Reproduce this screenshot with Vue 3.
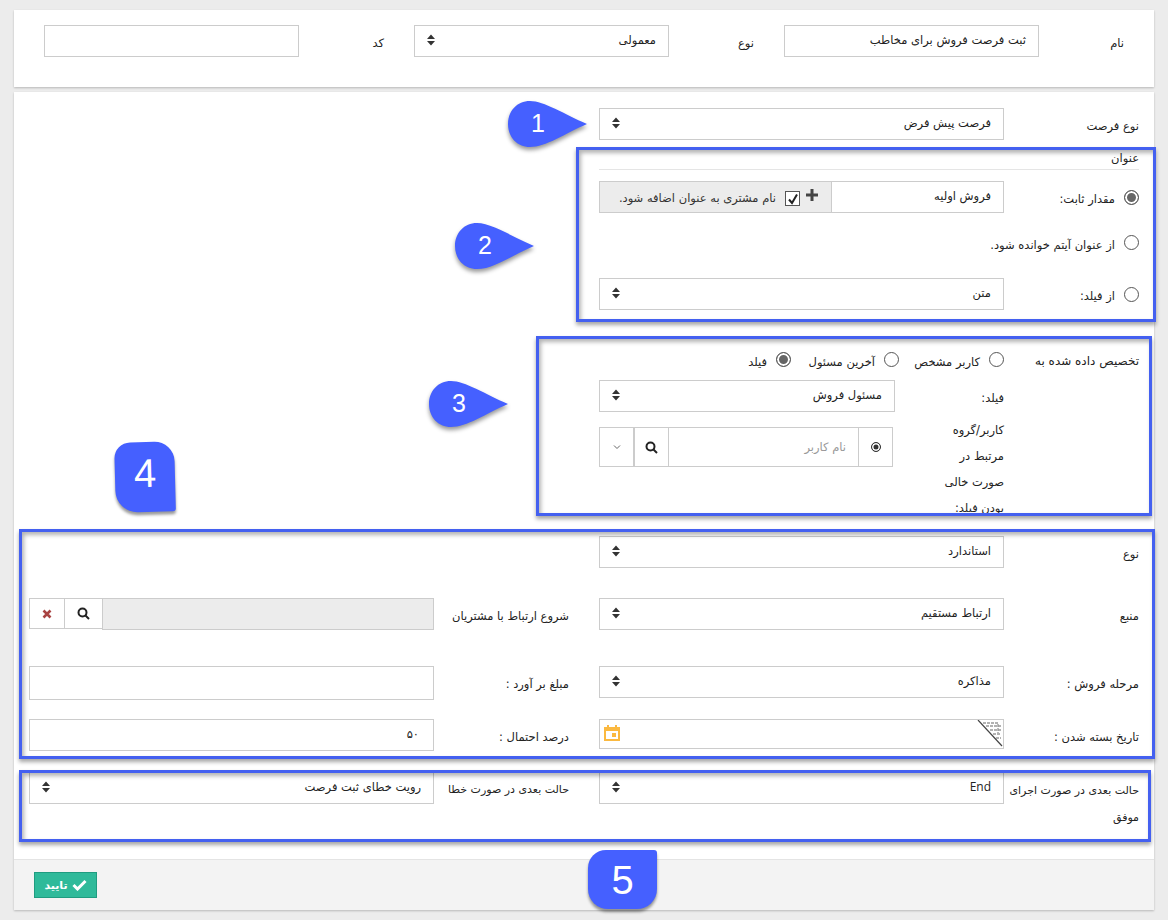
<template>
  <div class="page" dir="rtl">
    <!-- Top card -->
    <div class="card top-card">
      <div v-for="f in topFields" :key="f.label" class="top-field">
        <label class="top-label">{{ f.label }}</label>
        <div v-if="f.select" class="control select">
          <span>{{ f.value }}</span>
          <svg class="sort" width="10" height="12" viewBox="0 0 10 12"><path d="M5 0.5 9 5H1zM1 7h8l-4 4.500z" /></svg>
        </div>
        <div v-else class="control"><span>{{ f.value }}</span></div>
      </div>
    </div>

    <!-- Main card -->
    <div class="card main-card">
      <div class="body">
        <div class="row">
          <label class="label">نوع فرصت</label>
          <div class="control select">
            <span>فرصت پیش فرض</span>
            <svg class="sort" width="10" height="12" viewBox="0 0 10 12"><path d="M5 0.5 9 5H1zM1 7h8l-4 4.500z" /></svg>
          </div>
        </div>

        <div class="heading">عنوان</div>

        <div class="row radio-row first-radio">
          <span class="radio checked"></span>
          <label class="radio-label">مقدار ثابت:</label>
          <div class="input-group">
            <div class="control flat"><span>فروش اولیه</span></div>
            <div class="addon">
              <svg class="plus" width="12" height="12" viewBox="0 0 12 12"><path d="M4.500 0h3v4.500H12v3H7.500V12h-3V7.500H0v-3h4.500z" /></svg>
              <span class="check-box">
                <svg width="12" height="12" viewBox="0 0 12 12"><path d="M2 6.500 5 10 10 1.500" fill="none" stroke="#222" stroke-width="2" /></svg>
              </span>
              <span>نام مشتری به عنوان اضافه شود.</span>
            </div>
          </div>
        </div>

        <div class="row radio-row second-radio">
          <span class="radio"></span>
          <label class="radio-text">از عنوان آیتم خوانده شود.</label>
        </div>

        <div class="row radio-row third-radio">
          <span class="radio"></span>
          <label class="radio-label">از فیلد:</label>
          <div class="control select">
            <span>متن</span>
            <svg class="sort" width="10" height="12" viewBox="0 0 10 12"><path d="M5 0.5 9 5H1zM1 7h8l-4 4.500z" /></svg>
          </div>
        </div>

        <!-- Assigned to -->
        <div class="assign-row">
          <label class="label assign-label">تخصیص داده شده به</label>
          <div class="assign-options">
            <span class="option"><span class="radio"></span>کاربر مشخص</span>
            <span class="option"><span class="radio"></span>آخرین مسئول</span>
            <span class="option"><span class="radio checked"></span>فیلد</span>
          </div>
        </div>

        <div class="sub-row sub-field">
          <label class="sub-label">فیلد:</label>
          <div class="control select narrow">
            <span>مسئول فروش</span>
            <svg class="sort" width="10" height="12" viewBox="0 0 10 12"><path d="M5 0.5 9 5H1zM1 7h8l-4 4.500z" /></svg>
          </div>
        </div>

        <div class="sub-row sub-user">
          <label class="sub-label wrap">کاربر/گروه مرتبط در صورت خالی بودن فیلد:</label>
          <div class="user-group">
            <span class="cell target"><span class="dot"></span></span>
            <span class="cell user-input">نام کاربر</span>
            <span class="cell search">
              <svg width="13" height="13" viewBox="0 0 13 13"><circle cx="5.500" cy="5.500" r="4" fill="none" stroke="#222" stroke-width="2" /><path d="M8.500 8.500 12 12" stroke="#222" stroke-width="2" /></svg>
            </span>
            <span class="cell caret">
              <svg width="8" height="6" viewBox="0 0 8 6"><path d="M1 1.500 4 4.500 7 1.500" fill="none" stroke="#666" /></svg>
            </span>
          </div>
        </div>

        <!-- Details -->
        <div class="row detail-first">
          <label class="label">نوع</label>
          <div class="control select">
            <span>استاندارد</span>
            <svg class="sort" width="10" height="12" viewBox="0 0 10 12"><path d="M5 0.5 9 5H1zM1 7h8l-4 4.500z" /></svg>
          </div>
        </div>

        <div class="pair source-row">
          <div class="row">
            <label class="label">منبع</label>
            <div class="control select">
              <span>ارتباط مستقیم</span>
              <svg class="sort" width="10" height="12" viewBox="0 0 10 12"><path d="M5 0.5 9 5H1zM1 7h8l-4 4.500z" /></svg>
            </div>
          </div>
          <div class="row">
            <label class="label">شروع ارتباط با مشتریان</label>
            <div class="lookup">
              <div class="lookup-value"></div>
              <span class="cell lookup-search">
                <svg width="13" height="13" viewBox="0 0 13 13"><circle cx="5.500" cy="5.500" r="4" fill="none" stroke="#222" stroke-width="2" /><path d="M8.500 8.500 12 12" stroke="#222" stroke-width="2" /></svg>
              </span>
              <span class="cell lookup-clear">
                <svg width="10" height="10" viewBox="0 0 10 10"><path d="M1.500 1.500 8.500 8.500M8.500 1.500 1.500 8.500" stroke="#a94442" stroke-width="2.600" /></svg>
              </span>
            </div>
          </div>
        </div>

        <div class="pair stage-row">
          <div class="row">
            <label class="label">مرحله فروش :</label>
            <div class="control select">
              <span>مذاکره</span>
              <svg class="sort" width="10" height="12" viewBox="0 0 10 12"><path d="M5 0.5 9 5H1zM1 7h8l-4 4.500z" /></svg>
            </div>
          </div>
          <div class="row">
            <label class="label">مبلغ بر آورد :</label>
            <div class="control tall"></div>
          </div>
        </div>

        <div class="pair date-row">
          <div class="row">
            <label class="label">تاریخ بسته شدن :</label>
            <div class="control date">
              <svg class="corner" width="26" height="28" viewBox="0 0 26 28">
                <path d="M1 0 25 26" stroke="#444" stroke-width="1.200" fill="none" />
                <path d="M6 3H21V13M9 6H24M13 10H24M16 14H24M19 18H24" stroke="#999" stroke-width="1.300" stroke-dasharray="3 1" fill="none" />
              </svg>
              <svg class="calendar" width="16" height="16" viewBox="0 0 16 16">
                <path d="M3 0h2v2h6V0h2v2h3v14H0V2h3zM2 6v8h12V6z" fill="#fbb940" />
                <rect x="8" y="8" width="4" height="4" fill="#fbb940" />
              </svg>
            </div>
          </div>
          <div class="row">
            <label class="label">درصد احتمال :</label>
            <div class="control percent"><span>۵۰</span></div>
          </div>
        </div>

        <div class="pair next-row">
          <div class="row">
            <label class="label next-label">حالت بعدی در صورت اجرای موفق</label>
            <div class="control select">
              <span class="latin">End</span>
              <svg class="sort" width="10" height="12" viewBox="0 0 10 12"><path d="M5 0.5 9 5H1zM1 7h8l-4 4.500z" /></svg>
            </div>
          </div>
          <div class="row">
            <label class="label small-label">حالت بعدی در صورت خطا</label>
            <div class="control select">
              <span>رویت خطای ثبت فرصت</span>
              <svg class="sort" width="10" height="12" viewBox="0 0 10 12"><path d="M5 0.5 9 5H1zM1 7h8l-4 4.500z" /></svg>
            </div>
          </div>
        </div>
      </div>

      <div class="footer">
        <button class="confirm">
          <svg width="15" height="12" viewBox="0 0 15 12"><path d="M1.500 6 5.500 10 13.500 2" fill="none" stroke="#fff" stroke-width="3" /></svg>
          <span>تایید</span>
        </button>
      </div>
    </div>

    <!-- Annotation overlays -->
    <div v-for="b in boxes" :key="b.id" class="mark" :style="b.style"></div>

    <div v-for="c in drops" :key="c.n" class="drop" :style="c.style">
      <svg width="84" height="52" viewBox="0 0 84 52"><path d="M24 1C38 1 58 14 81 24 58 34 40 47 24 47 11 47 2 37 2 24 2 11 11 1 24 1z" /></svg>
      <span class="drop-num">{{ c.n }}</span>
    </div>

    <div class="tag tag-four"><span>4</span></div>
    <div class="tag tag-five"><span>5</span></div>
  </div>
</template>

<script setup>
const topFields = [
  { label: 'نام', value: 'ثبت فرصت فروش برای مخاطب' },
  { label: 'نوع', value: 'معمولی', select: true },
  { label: 'کد', value: '' }
]

const box = (x, y, w, h) => ({ left: x + 'px', top: y + 'px', width: w + 'px', height: h + 'px' })

const boxes = [
  { id: 2, style: box(576, 147, 580, 175) },
  { id: 3, style: box(536, 336, 616, 180) },
  { id: 4, style: box(19, 529, 1136, 230) },
  { id: 5, style: box(19, 770, 1132, 72) }
]

const drops = [
  { n: 1, style: { left: '506px', top: '100px' } },
  { n: 2, style: { left: '453px', top: '222px' } },
  { n: 3, style: { left: '427px', top: '380px' } }
]
</script>

<style>
html, body {
  margin: 0;
  background: #ececec;
}
</style>

<style scoped>
.page {
  position: relative;
  box-sizing: border-box;
  width: 1168px;
  height: 920px;
  padding: 10px 14px 0 14px;
  font-family: "DejaVu Sans", sans-serif;
  font-size: 11.5px;
  color: #222;
  overflow: hidden;
}

.card {
  background: #fff;
  box-shadow: 0 1px 2px rgba(0, 0, 0, 0.22);
}

.top-card {
  display: grid;
  grid-template-columns: repeat(3, 370px);
  height: 77px;
  box-sizing: border-box;
  padding-top: 15px;
}

.top-field {
  display: flex;
  padding-right: 30px;
}

.top-label {
  width: 85px;
  line-height: 36px;
}

.main-card {
  margin-top: 5px;
  height: 818px;
  display: flex;
  flex-direction: column;
}

.body {
  flex: 1;
  padding: 16px 15px 0 14px;
}

.row {
  display: flex;
  align-items: flex-start;
}

.label {
  width: 135px;
  height: 32px;
  flex: none;
  line-height: 36px;
}

.small-label {
  font-size: 11px;
}

.control {
  box-sizing: border-box;
  width: 405px;
  height: 32px;
  border: 1px solid #ccc;
  background: #fff;
  position: relative;
  padding: 0 12px;
  line-height: 28px;
  flex: none;
}

.top-field .control {
  width: 255px;
}

.sort {
  position: absolute;
  left: 11px;
  top: 8px;
  fill: #333;
}

.heading {
  margin-top: 8px;
  height: 21px;
  line-height: 20px;
  width: 540px;
  border-bottom: 1px solid #e5e5e5;
}

.radio {
  box-sizing: border-box;
  display: inline-block;
  width: 15px;
  height: 15px;
  border: 1px solid #555;
  border-radius: 50%;
  background: #fff;
  flex: none;
}

.radio.checked {
  box-shadow: inset 0 0 0 2px #fff;
  background: #666;
}

.radio-row > .radio {
  margin: 9px 0 0 9px;
}

.radio-label {
  width: 111px;
  height: 32px;
  flex: none;
  line-height: 36px;
}

.radio-text {
  line-height: 36px;
}

.first-radio {
  margin-top: 11px;
}

.second-radio {
  margin-top: 14px;
  height: 32px;
}

.second-radio > .radio {
  margin-top: 8px;
}

.third-radio {
  margin-top: 19px;
}

.input-group {
  display: flex;
  width: 405px;
  height: 32px;
  flex: none;
}

.control.flat {
  width: 173px;
}

.addon {
  flex: 1;
  box-sizing: border-box;
  border: 1px solid #ccc;
  border-right: none;
  background: #ececec;
  display: flex;
  align-items: flex-start;
  padding: 6px 13px 0 0;
  gap: 6px;
  line-height: 20px;
  color: #333;
  white-space: nowrap;
}

.plus {
  fill: #444;
  margin-top: 1px;
  flex: none;
}

.check-box {
  box-sizing: border-box;
  width: 15px;
  height: 15px;
  border: 1px solid #555;
  background: #fff;
  display: flex;
  align-items: center;
  justify-content: center;
  margin: 3px 0 0 3px;
  flex: none;
}

.assign-row {
  display: flex;
  margin-top: 40px;
  height: 30px;
}

.assign-row .label {
  line-height: 22px;
}

.assign-label {
  font-size: 12px;
}

.assign-options {
  display: grid;
  grid-template-columns: 105px 108px auto;
  line-height: 24px;
}

.option {
  display: flex;
  align-items: flex-start;
}

.option .radio {
  margin: 2px 0 0 9px;
}

.sub-row {
  display: flex;
  padding-right: 135px;
}

.sub-label {
  width: 109px;
  height: 32px;
  flex: none;
  line-height: 36px;
}

.sub-label.wrap {
  width: 68px;
  height: auto;
  margin-left: 43px;
  line-height: 26px;
}

.control.narrow {
  width: 296px;
}

.sub-user {
  margin-top: 5px;
  height: 104px;
}

.user-group {
  display: flex;
  height: 40px;
  width: 294px;
  margin-top: 10px;
}

.cell {
  box-sizing: border-box;
  border: 1px solid #ccc;
  border-right: none;
  display: flex;
  align-items: center;
  justify-content: center;
  flex: none;
}

.target {
  width: 35px;
  border-right: 1px solid #ccc;
}

.dot {
  box-sizing: border-box;
  width: 10px;
  height: 10px;
  border: 1.500px solid #333;
  border-radius: 50%;
  box-shadow: inset 0 0 0 1.500px #fff;
  background: #333;
}

.user-input {
  width: 190px;
  justify-content: flex-start;
  padding-right: 12px;
  color: #999;
}

.search {
  width: 34px;
}

.caret {
  width: 35px;
  border-right: 1px solid #ccc;
}

.detail-first {
  margin-top: 15px;
}

.pair {
  display: grid;
  grid-template-columns: 570px 540px;
}

.source-row {
  margin-top: 30px;
}

.stage-row {
  margin-top: 36px;
}

.date-row {
  margin-top: 19px;
}

.next-row {
  margin-top: 21px;
}

.lookup {
  display: flex;
  width: 405px;
  height: 32px;
  flex: none;
}

.lookup-value {
  flex: 1;
  border: 1px solid #ccc;
  background: #ececec;
}

.lookup-search {
  width: 38px;
  height: 31px;
}

.lookup-clear {
  width: 35px;
  height: 31px;
}

.control.tall {
  height: 34px;
}

.control.date {
  height: 30px;
}

.control.percent {
  padding-right: 14px;
}

.corner {
  position: absolute;
  top: 0;
  right: 0;
}

.calendar {
  position: absolute;
  left: 4px;
  top: 5px;
}

.next-label {
  font-size: 11px;
  line-height: 27px;
  padding-top: 5px;
  box-sizing: border-box;
}

.latin {
  font-family: "Open Sans", sans-serif;
  font-size: 12px;
}

.footer {
  height: 51px;
  box-sizing: border-box;
  background: #f3f3f3;
  border-top: 1px solid #e4e4e4;
  padding: 12px 20px 0 20px;
  display: flex;
  justify-content: flex-end;
}

.confirm {
  box-sizing: border-box;
  width: 63px;
  height: 26px;
  background: #2fba9a;
  border: 1px solid #1f9c80;
  color: #fff;
  font: bold 11px "DejaVu Sans", sans-serif;
  display: flex;
  align-items: center;
  justify-content: center;
  gap: 4px;
  padding: 0;
}

.mark {
  position: absolute;
  box-sizing: border-box;
  border: 3px solid #4460f0;
  box-shadow: 0 3px 4px rgba(0, 0, 0, 0.35), inset 2px 3px 4px rgba(0, 0, 0, 0.3);
  pointer-events: none;
}

.drop {
  position: absolute;
  width: 84px;
  height: 52px;
}

.drop svg {
  fill: #4560ff;
  filter: drop-shadow(0 3px 2px rgba(0, 0, 0, 0.4));
}

.drop-num {
  position: absolute;
  left: 25px;
  top: 9px;
  width: 14px;
  text-align: center;
  color: #fff;
  font: 25px "Liberation Sans", sans-serif;
}

.tag {
  position: absolute;
  background: #4560ff;
  color: #fff;
  box-shadow: 0 3px 3px rgba(0, 0, 0, 0.4);
  display: flex;
  justify-content: center;
  font-family: "Liberation Sans", sans-serif;
  font-size: 40px;
}

.tag-four {
  left: 115px;
  top: 442px;
  width: 60px;
  height: 70px;
  border-radius: 16px 20px 3px 22px;
  transform: rotate(-1.500deg);
  line-height: 62px;
}

.tag-five {
  left: 588px;
  top: 850px;
  width: 69px;
  height: 59px;
  border-radius: 18px 3px 20px 20px;
  line-height: 60px;
}
</style>
